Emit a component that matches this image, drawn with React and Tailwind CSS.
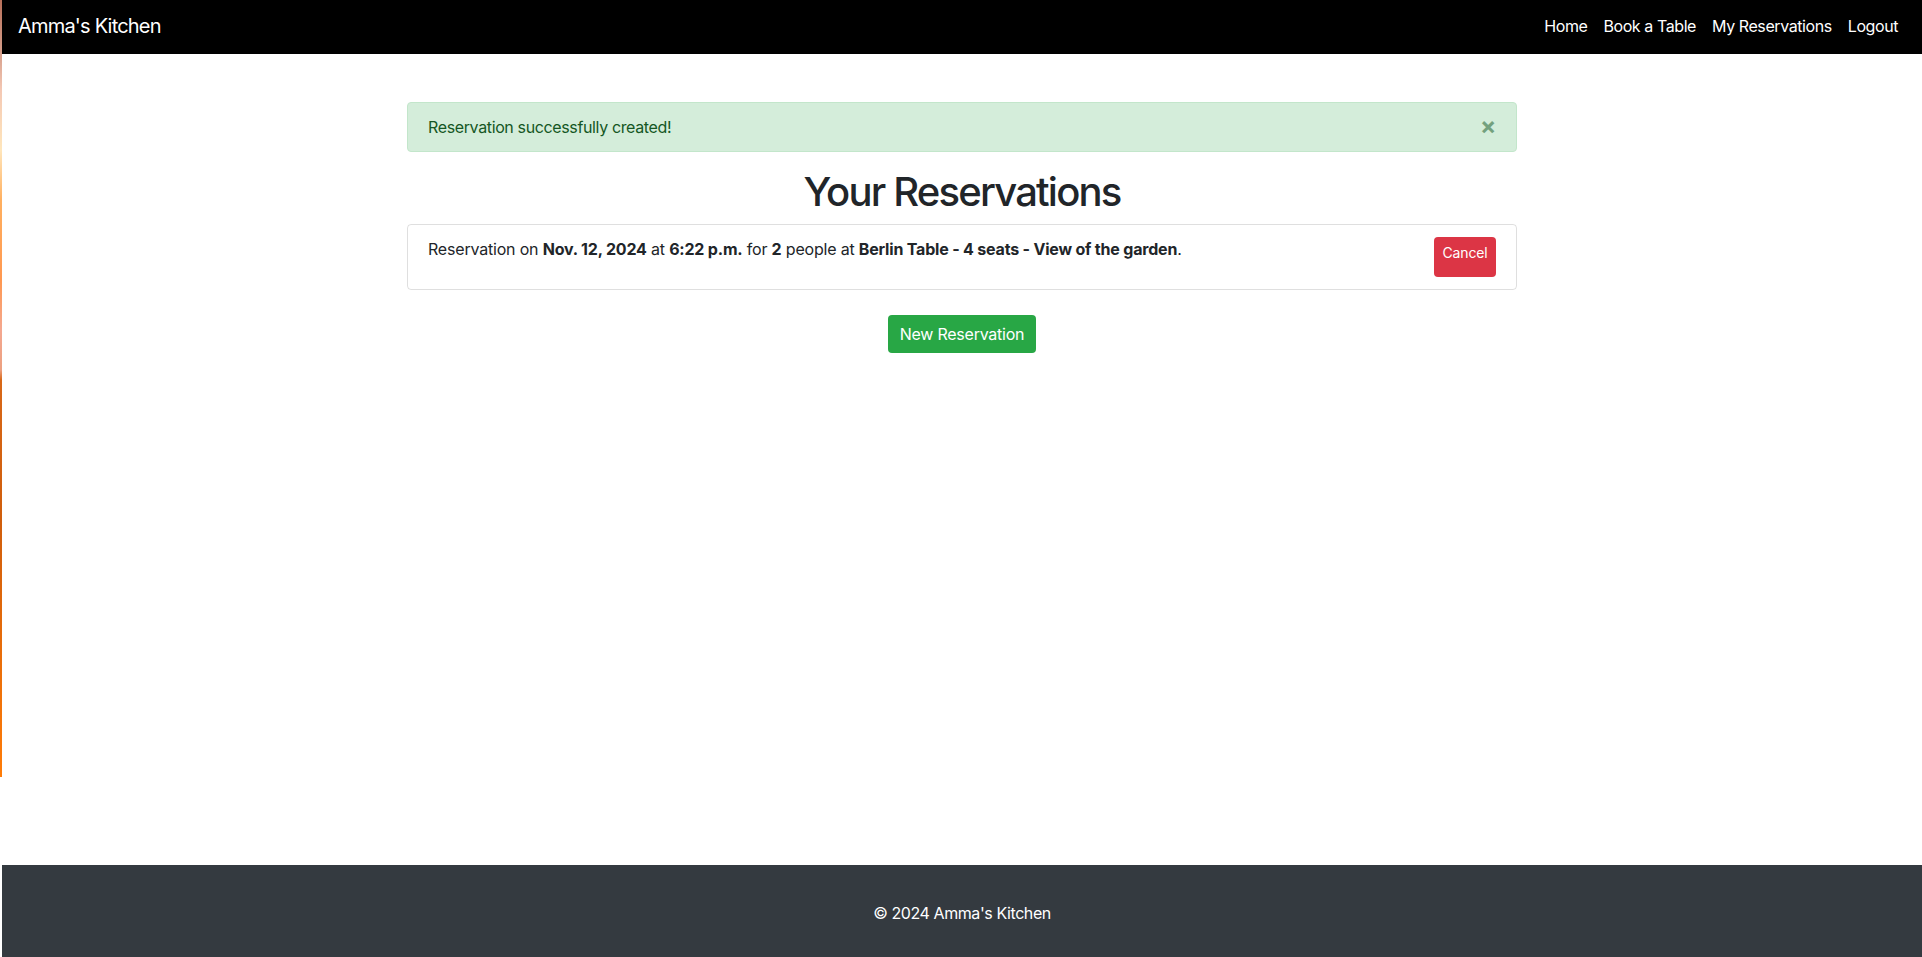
import React from 'react';

const NAV_LINKS = ['Home', 'Book a Table', 'My Reservations', 'Logout'];

function Navbar() {
  return (
    <nav className="h-[54px] bg-black flex items-center justify-between px-4">
      <a href="#" className="text-white text-[20px] leading-[30px] pb-[2px] tracking-[-0.04em]">
        Amma&apos;s Kitchen
      </a>
      <ul className="flex items-center pb-[2px]">
        {NAV_LINKS.map((link) => (
          <li key={link}>
            <a href="#" className="block px-2 text-white text-[16px] leading-6 tracking-[-0.026em]">
              {link}
            </a>
          </li>
        ))}
      </ul>
    </nav>
  );
}

function Footer() {
  return (
    <footer className="h-[92px] bg-[#343a40] text-white text-center pt-[36px]">
      <p className="text-[16px] leading-6 tracking-[-0.026em]">&copy; 2024 Amma&apos;s Kitchen</p>
    </footer>
  );
}

export default function App() {
  return (
    <div
      className="flex min-h-[957px] bg-white text-[#212529]"
      style={{ fontFamily: 'Inter, "Noto Sans", sans-serif' }}
    >
      {/* background peeking through on the far left */}
      <div className="w-[2px] shrink-0 flex flex-col">
        <div className="h-[777px] bg-[linear-gradient(to_bottom,#b8705a_0px,#d49c88_50px,#f4c8b4_90px,#ffe6bc_150px,#ffb060_200px,#ff9850_280px,#f4a890_330px,#eca080_370px,#d86818_380px,#d05e0c_520px,#ff7c08_777px)]" />
      </div>

      <div className="flex-1 flex flex-col">
        <Navbar />

        <main className="flex-1">
          <div className="w-[1140px] mx-auto px-[15px] mt-12">
            {/* Alert */}
            <div className="relative h-[50px] bg-[#d4edda] border border-[#c3e6cb] rounded text-[#155724] px-5 py-[12px] mb-4 text-[16px] leading-6 tracking-[-0.023em]">
              Reservation successfully created!
              <button className="absolute top-0 right-0 px-5 py-[11px] text-[24px] leading-6 font-bold text-[#155724] opacity-50">
                &times;
              </button>
            </div>

            <h1 className="text-center text-[40px] leading-[48px] font-medium mb-2 tracking-[-0.045em]">
              Your Reservations
            </h1>

            {/* Reservation list */}
            <ul className="border border-[rgba(0,0,0,0.125)] rounded">
              <li className="flex items-start justify-between px-5 py-3 text-[16px] leading-6 tracking-[-0.012em]">
                <span>
                  Reservation on <strong className="font-bold">Nov. 12, 2024</strong> at{' '}
                  <strong className="font-bold">6:22 p.m.</strong> for <strong className="font-bold">2</strong> people at{' '}
                  <strong className="font-bold">Berlin Table - 4 seats - View of the garden</strong>.
                </span>
                <button className="h-[40px] w-[62px] bg-[#dc3545] text-white rounded text-[14px] leading-[21px] pt-[5px] self-start flex justify-center items-start tracking-[-0.01em]">
                  Cancel
                </button>
              </li>
            </ul>

            <div className="flex justify-center mt-[25px]">
              <button className="bg-[#28a745] text-white rounded px-3 py-[7px] text-[16px] leading-6 tracking-[-0.015em]">
                New Reservation
              </button>
            </div>
          </div>
        </main>

        <Footer />
      </div>
    </div>
  );
}
